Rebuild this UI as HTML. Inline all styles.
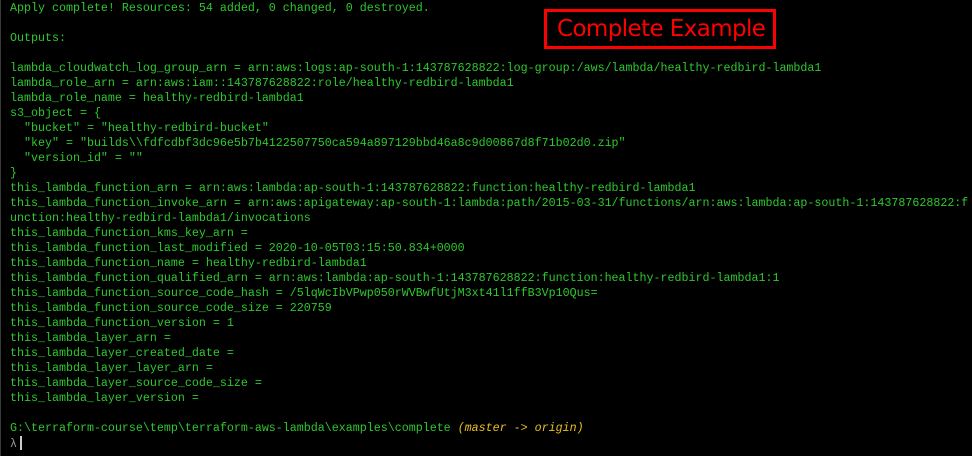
<!DOCTYPE html>
<html><head><meta charset="utf-8"><style>
html,body{margin:0;padding:0;background:#000;width:972px;height:456px;overflow:hidden}
body{position:relative;border-left:1px solid #3a3a3a;box-sizing:border-box}
pre{margin:0;position:absolute;left:9px;top:1px;font-family:"Liberation Mono",monospace;font-size:11.67px;line-height:15px;color:#2ec82e;white-space:pre}
.y{color:#e8c020;font-style:italic}
.g{color:#9a9a9a}
.cur{display:inline-block;width:2px;height:14px;background:#ccc;vertical-align:-3px;margin-left:3px}
.box{position:absolute;left:543px;top:9px;width:216px;height:34px;border:3px solid #ff0000;color:#ff0000;font-family:"DejaVu Sans","Liberation Sans",sans-serif;font-size:23px;line-height:34px;padding-left:10px;box-sizing:content-box;letter-spacing:-0.6px;white-space:nowrap;overflow:hidden}
</style></head><body>
<pre>Apply complete! Resources: 54 added, 0 changed, 0 destroyed.

Outputs:

lambda_cloudwatch_log_group_arn = arn:aws:logs:ap-south-1:143787628822:log-group:/aws/lambda/healthy-redbird-lambda1
lambda_role_arn = arn:aws:iam::143787628822:role/healthy-redbird-lambda1
lambda_role_name = healthy-redbird-lambda1
s3_object = {
  "bucket" = "healthy-redbird-bucket"
  "key" = "builds\\fdfcdbf3dc96e5b7b4122507750ca594a897129bbd46a8c9d00867d8f71b02d0.zip"
  "version_id" = ""
}
this_lambda_function_arn = arn:aws:lambda:ap-south-1:143787628822:function:healthy-redbird-lambda1
this_lambda_function_invoke_arn = arn:aws:apigateway:ap-south-1:lambda:path/2015-03-31/functions/arn:aws:lambda:ap-south-1:143787628822:f
unction:healthy-redbird-lambda1/invocations
this_lambda_function_kms_key_arn =
this_lambda_function_last_modified = 2020-10-05T03:15:50.834+0000
this_lambda_function_name = healthy-redbird-lambda1
this_lambda_function_qualified_arn = arn:aws:lambda:ap-south-1:143787628822:function:healthy-redbird-lambda1:1
this_lambda_function_source_code_hash = /5lqWcIbVPwp050rWVBwfUtjM3xt41l1ffB3Vp10Qus=
this_lambda_function_source_code_size = 220759
this_lambda_function_version = 1
this_lambda_layer_arn =
this_lambda_layer_created_date =
this_lambda_layer_layer_arn =
this_lambda_layer_source_code_size =
this_lambda_layer_version =

G:\terraform-course\temp\terraform-aws-lambda\examples\complete <span class="y">(master -&gt; origin)</span>
<span class="g">λ</span><span class="cur"></span></pre>
<div class="box">Complete Example</div>
</body></html>
